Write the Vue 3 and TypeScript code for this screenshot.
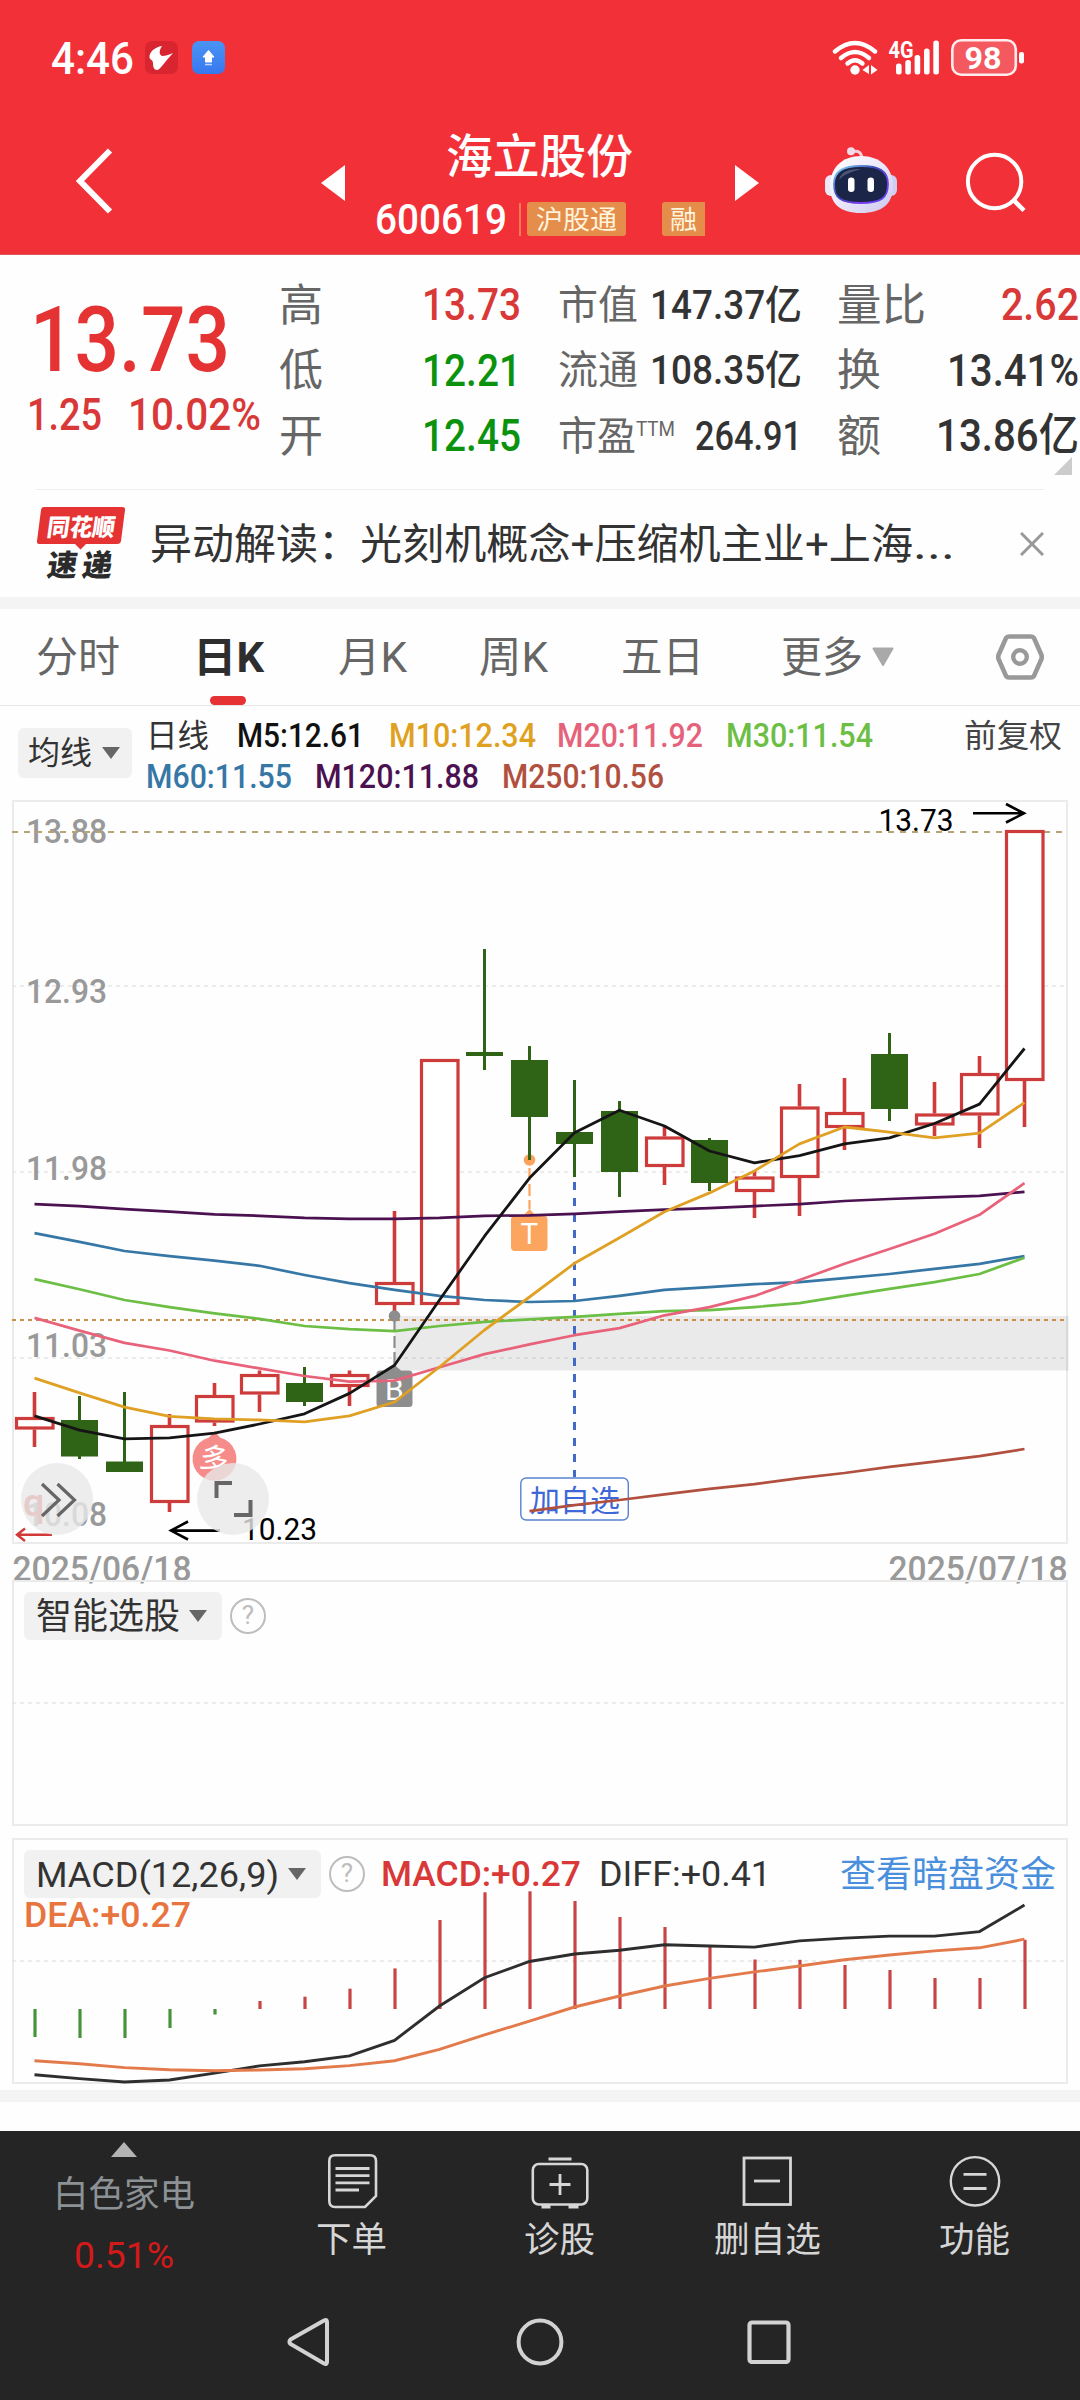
<script setup lang="ts">
import { defineComponent, h } from 'vue'

/* Single-line label whose advance width is fixed; cap height is centred in its box. */
const Fit = defineComponent({
  props: {
    t: { type: String, required: true },
    w: { type: Number, required: true },
    s: { type: Number, required: true },
  },
  setup(p) {
    return () =>
      h('svg', { width: p.w, height: p.s, style: 'display:block;overflow:visible;flex:none' }, [
        h('text', {
          x: 0,
          y: p.s * 0.855,
          'font-size': p.s,
          textLength: p.w,
          lengthAdjust: 'spacingAndGlyphs',
          fill: 'currentColor',
        }, p.t),
      ])
  },
})

const X0 = 34.5
const STEP = 45
const cx = (i: number) => X0 + STEP * i
const pts = (ys: number[], start = 0) => ys.map((y, i) => `${cx(i + start)},${y}`).join(' ')

interface Candle { up: boolean; top: number; bottom: number; high: number; low: number }
const c = (up: boolean, top: number, bottom: number, high: number, low: number): Candle => ({ up, top, bottom, high, low })
const candles: Candle[] = [
  c(true, 617, 629.5, 592, 647),
  c(false, 620, 656.5, 596, 659),
  c(false, 661.5, 672, 592, 672),
  c(true, 625, 703, 614, 712),
  c(true, 595, 622.5, 583, 626),
  c(true, 574, 594.5, 570.5, 612),
  c(false, 583, 602, 567, 606),
  c(true, 574, 587, 570.5, 606),
  c(true, 482, 505, 411, 516),
  c(true, 259, 505, 259, 505),
  c(false, 252, 256, 149, 270),
  c(false, 260, 317, 246, 360),
  c(false, 332, 344, 280, 377),
  c(false, 311, 372, 301, 397),
  c(true, 336.5, 367, 326.5, 385),
  c(false, 340, 383, 338, 391),
  c(true, 376.5, 392, 370.5, 418),
  c(true, 306.5, 378, 284, 416),
  c(true, 312, 328, 278, 350),
  c(false, 254, 309, 233, 321),
  c(true, 313.5, 325.5, 282, 336),
  c(true, 273, 315.5, 256, 348),
  c(true, 30, 281, 30, 327),
]

const averages = [
  { color: '#4b1150', start: 0, w: 2.7, ys: [404.1, 406.1, 409.2, 411.7, 414.3, 415.8, 417.9, 418.9, 418.9, 417.9, 415.8, 415.3, 413.8, 411.7, 409.7, 408.2, 406.1, 404.1, 401, 399, 397.4, 395.9, 391.8] },
  { color: '#3677a5', start: 0, w: 2.7, ys: [433.2, 441.8, 451, 456.1, 460.7, 465.8, 475, 483.2, 489.8, 495.9, 500, 502, 501, 495.9, 489.8, 487.2, 484.2, 482.1, 478.1, 474, 468.9, 463.8, 456.1] },
  { color: '#6cbe45', start: 0, w: 2.7, ys: [479.1, 489.3, 500, 507.1, 513.3, 518.9, 526, 529.1, 531.1, 526, 521.9, 519.4, 516.8, 513.8, 511.2, 510.2, 507.1, 503.1, 495.9, 488.8, 482.1, 474, 457.7] },
  { color: '#e8637a', start: 0, w: 2.7, ys: [517.9, 530.6, 542.9, 550.5, 560.7, 568.4, 576, 581.6, 580.6, 567.3, 554.1, 544.4, 535.2, 528.1, 515.3, 507.1, 495.9, 480.1, 463.8, 449, 433.7, 414.8, 383.2] },
  { color: '#151515', start: 0, w: 2.8, ys: [615.8, 630.1, 638.8, 637.8, 633.2, 624, 613.8, 593.4, 565.3, 500, 436.2, 378.1, 332.7, 310.2, 326, 351, 362.8, 355.6, 343.9, 337.8, 323.5, 304.1, 248.5] },
  { color: '#dfa023', start: 0, w: 2.8, ys: [578.1, 592.9, 607.1, 616.3, 618.9, 619.9, 621.9, 615.8, 602, 567, 530, 497, 463.3, 437.8, 411.7, 392.9, 370.9, 343.9, 327, 332.1, 337.8, 333.2, 302.6] },
  { color: '#b1503f', start: 11, w: 2.7, ys: [711.2, 705.1, 700, 694.4, 688.8, 684.2, 678.1, 673, 666.8, 661.7, 656.1, 649] },
]

const axis = [
  { t: '13.88', y: 43 },
  { t: '12.93', y: 203 },
  { t: '11.98', y: 380 },
  { t: '11.03', y: 557 },
  { t: '10.08', y: 726 },
]

const ZERO = 2009
const bars = [2037, 2038, 2038, 2028, 2014.5, 2001, 1996.7, 1988.7, 1968.4, 1920, 1892.3, 1891.3, 1901, 1917, 1927, 1946.4, 1959.5, 1959.8, 1965, 1970, 1978, 1978, 1939.8]
const diff = [2074.8, 2078.6, 2082, 2080, 2073.1, 2065.9, 2061.8, 2055.9, 2040.4, 2006, 1977.7, 1961.5, 1954, 1950.2, 1944.7, 1946, 1947.1, 1940.9, 1938.1, 1936.1, 1936.1, 1931.6, 1905.1]
const dea = [2060.7, 2063.8, 2067.6, 2069.7, 2070.7, 2070, 2068.7, 2065.6, 2060.7, 2049.4, 2034.9, 2021.1, 2007, 1996, 1986, 1978.4, 1971.9, 1966, 1959.8, 1955, 1950.9, 1947.8, 1939.2]
</script>

<template>
  <div class="page">
    <header class="top">
      <div class="status">
        <Fit class="clock" t="4:46" :w="83" :s="44" />
        <svg class="app1" width="33" height="33" viewBox="0 0 33 33">
          <rect width="33" height="33" rx="7" fill="#d9252f" />
          <path d="M17 5C10 6 4 11 4.500 16.500C5 19 8 19 8 22C8 26 9 29 12 29C15 29 17 24 28 12C25 13 21 15 17 15C13 13 15 8 17 5Z" fill="#fff" />
        </svg>
        <svg class="app2" width="33" height="33" viewBox="0 0 33 33">
          <defs><linearGradient id="upg" x1="0" y1="0" x2="0" y2="1"><stop offset="0" stop-color="#4a94f5" /><stop offset="1" stop-color="#3877ee" /></linearGradient></defs>
          <rect width="33" height="33" rx="7" fill="url(#upg)" />
          <path d="M16.500 9.500L22 16H19.500V21H13.500V16H11Z" fill="#fff" stroke="#fff" stroke-width="1" stroke-linejoin="round" />
          <rect x="13" y="22.800" width="7" height="1.500" fill="#b9d5ff" />
        </svg>
        <svg class="signals" width="195" height="42" viewBox="832 36 195 42">
          <g fill="none" stroke="#fff" stroke-width="4.400" stroke-linecap="round">
            <path d="M835 50.500Q855 33.500 875 50.500" />
            <path d="M841 57Q855 45 869 57" />
            <path d="M847.500 62.500Q855 56 862.500 62.500" />
          </g>
          <circle cx="855" cy="69" r="4.700" fill="#fff" />
          <path d="M862.500 69L869 64V73ZM871 64L877.500 69L871 73.500Z" fill="#fff" />
          <text class="g4" x="888.500" y="56.500" font-size="23" textLength="25" lengthAdjust="spacingAndGlyphs" fill="#fff">4G</text>
          <g fill="#fff">
            <rect x="896" y="62.500" width="5.600" height="11" rx="2.500" />
            <rect x="905.300" y="59" width="5.600" height="14.500" rx="2.500" />
            <rect x="914.600" y="54" width="5.600" height="19.500" rx="2.500" />
            <rect x="924" y="47.500" width="5.600" height="26" rx="2.500" />
            <rect x="933.300" y="39.500" width="5.600" height="34" rx="2.500" />
          </g>
          <rect x="952.300" y="39.300" width="63.500" height="34.500" rx="9" fill="#fff" fill-opacity=".2" stroke="#fff" stroke-opacity=".9" stroke-width="2.600" />
          <rect x="1019" y="51" width="5" height="11.500" rx="2.200" fill="#fff" />
          <text class="g4" x="964.500" y="68.300" font-size="32" textLength="37" lengthAdjust="spacingAndGlyphs" fill="#fff">98</text>
        </svg>
      </div>
      <div class="title-bar">
        <svg class="back" width="40" height="68" viewBox="0 0 40 68"><path d="M36 3.500L6 34L36 64.500" fill="none" stroke="#fff" stroke-width="6" /></svg>
        <svg class="prev" width="24" height="36" viewBox="0 0 24 36"><path d="M24 0V36L0 18Z" fill="#fff" /></svg>
        <div class="stock">
          <Fit class="name" t="海立股份" :w="187" :s="47" />
          <div class="code-row">
            <Fit class="code" t="600619" :w="132" :s="42.5" />
            <i class="sep" />
            <div class="tag tag-a"><Fit t="沪股通" :w="81" :s="26.500" /></div>
            <div class="tag tag-b"><Fit t="融" :w="27" :s="26.500" /></div>
          </div>
        </div>
        <svg class="next" width="24" height="36" viewBox="0 0 24 36"><path d="M0 0V36L24 18Z" fill="#fff" /></svg>
        <svg class="robot" width="74" height="70" viewBox="824 145 74 70">
          <defs>
            <linearGradient id="rb" x1="0" y1="0" x2="1" y2="1"><stop offset="0" stop-color="#fff" /><stop offset=".5" stop-color="#ece8fa" /><stop offset="1" stop-color="#c9c8ec" /></linearGradient>
            <linearGradient id="rr" x1="0" y1="0" x2="1" y2="1"><stop offset="0" stop-color="#8ee0ff" /><stop offset=".4" stop-color="#3b4bb5" /><stop offset=".75" stop-color="#7c3cf0" /><stop offset="1" stop-color="#4a4af0" /></linearGradient>
          </defs>
          <path d="M852 152Q862 149 862 160" fill="none" stroke="#f6cfd8" stroke-width="3" />
          <circle cx="851" cy="151.300" r="4" fill="#f2dbe8" />
          <rect x="825" y="175" width="12" height="21" rx="6" fill="#ece9f7" />
          <rect x="885" y="175" width="12" height="21" rx="6" fill="#cfcdf0" />
          <path d="M861 156C880 156 893 168 893 186C893 204 882 213 861 213C840 213 830 204 830 186C830 168 842 156 861 156Z" fill="url(#rb)" />
          <path d="M861 166C879 166 888 171 888 184C888 198 881 203 861 203C841 203 834 198 834 184C834 171 843 166 861 166Z" fill="#1b2547" stroke="url(#rr)" stroke-width="1.800" />
          <path d="M839 180C841 171 849 169 861 169C851 172 843 175 839 180Z" fill="#4a5575" />
          <rect x="848" y="177.500" width="6.500" height="14.500" rx="3.200" fill="#fff" />
          <rect x="867.500" y="177.500" width="6.500" height="14.500" rx="3.200" fill="#fff" />
        </svg>
        <svg class="search" width="62" height="62" viewBox="965 151 62 62">
          <circle cx="994.600" cy="181.500" r="26.700" fill="none" stroke="#fff" stroke-width="4" />
          <path d="M1013.500 200L1024 210.500" stroke="#fff" stroke-width="4.500" />
        </svg>
      </div>
    </header>

    <section class="quote">
      <div class="price">
        <Fit class="big" t="13.73" :w="200" :s="90" />
        <div class="chg">
          <Fit t="1.25" :w="75" :s="45" />
          <Fit class="pct" t="10.02%" :w="133" :s="45" />
        </div>
      </div>
      <div class="col col1">
        <div><Fit class="lab" t="高" :w="44" :s="44" /><Fit class="num red" t="13.73" :w="99" :s="45" /></div>
        <div><Fit class="lab" t="低" :w="44" :s="44" /><Fit class="num green" t="12.21" :w="99" :s="45" /></div>
        <div><Fit class="lab" t="开" :w="44" :s="44" /><Fit class="num green" t="12.45" :w="99" :s="45" /></div>
      </div>
      <div class="col col2">
        <div><Fit class="lab" t="市值" :w="80" :s="40" /><Fit class="num" t="147.37亿" :w="152" :s="40" /></div>
        <div><Fit class="lab" t="流通" :w="80" :s="40" /><Fit class="num" t="108.35亿" :w="152" :s="40" /></div>
        <div><Fit class="lab" t="市盈" :w="78" :s="40" /><Fit class="lab ttm" t="TTM" :w="39" :s="20" /><Fit class="num" t="264.91" :w="107" :s="40" /></div>
      </div>
      <div class="col col3">
        <div><Fit class="lab" t="量比" :w="89" :s="44" /><Fit class="num red" t="2.62" :w="78" :s="45" /></div>
        <div><Fit class="lab" t="换" :w="44" :s="44" /><Fit class="num" t="13.41%" :w="132" :s="45" /></div>
        <div><Fit class="lab" t="额" :w="44" :s="44" /><Fit class="num" t="13.86亿" :w="143" :s="45" /></div>
      </div>
      <i class="corner" />
    </section>

    <section class="news">
      <svg class="logo" width="92" height="76" viewBox="36 506 92 76">
        <path d="M44 507H122Q125.500 507 125 510L121 541Q120.500 544 117 544H86L80.500 549.500L75 544H40Q36.500 544 37 541L41 510Q41.500 507 44 507Z" fill="#e53232" />
        <text class="lg" transform="translate(46 535.500) skewX(-8)" font-size="24" textLength="68" lengthAdjust="spacingAndGlyphs" fill="#fff">同花顺</text>
        <text class="lg" transform="translate(46 575.500) skewX(-8)" x="0" font-size="30" textLength="30" lengthAdjust="spacingAndGlyphs" fill="#2b2b2b">速</text>
        <text class="lg" transform="translate(81 575.500) skewX(-8)" x="0" font-size="30" textLength="30" lengthAdjust="spacingAndGlyphs" fill="#2b2b2b">递</text>
      </svg>
      <Fit class="n1" t="异动解读：" :w="210" :s="42" />
      <Fit t="光刻机概念+压缩机主业+上海" :w="553" :s="42" />
      <Fit t="..." :w="42" :s="42" />
      <svg class="close" width="24" height="24" viewBox="0 0 24 24"><path d="M1 1L23 23M23 1L1 23" stroke="#999" stroke-width="3" /></svg>
    </section>

    <nav class="tabs">
      <Fit class="t1" t="分时" :w="84" :s="42" />
      <div class="active"><Fit t="日K" :w="71" :s="42" /><i /></div>
      <Fit class="t3" t="月K" :w="69" :s="42" />
      <Fit class="t4" t="周K" :w="69" :s="42" />
      <Fit class="t5" t="五日" :w="83" :s="42" />
      <Fit class="t6" t="更多" :w="82" :s="42" />
      <svg class="more" width="24" height="20" viewBox="0 0 24 20"><path d="M2.500 1.500H21.500L12 18Z" fill="#a9a9a9" stroke="#a9a9a9" stroke-width="2" stroke-linejoin="round" /></svg>
      <svg class="hex" width="50" height="48" viewBox="995 633 50 48">
        <path d="M1009 636.500H1031Q1033 636.500 1034 638L1041.500 655Q1042 657 1041.500 659L1034 676Q1033 677.500 1031 677.500H1009Q1007 677.500 1006 676L998.500 659Q998 657 998.500 655L1006 638Q1007 636.500 1009 636.500Z" fill="none" stroke="#999" stroke-width="4.600" />
        <circle cx="1020" cy="657" r="6.800" fill="none" stroke="#999" stroke-width="4.400" />
      </svg>
    </nav>

    <section class="legend">
      <div class="pick"><Fit t="均线" :w="64" :s="32" /><svg width="18" height="12" viewBox="0 0 18 12"><path d="M0 0H18L9 12Z" fill="#666" /></svg></div>
      <div class="rows">
        <div class="row">
          <Fit class="day" t="日线" :w="63" :s="31.500" />
          <Fit class="m5" t="M5:12.61" :w="127" :s="32.5" />
          <Fit class="m10" t="M10:12.34" :w="147" :s="32.5" />
          <Fit class="m20" t="M20:11.92" :w="146" :s="32.5" />
          <Fit class="m30" t="M30:11.54" :w="147" :s="32.5" />
          <Fit class="adj" t="前复权" :w="98" :s="32" />
        </div>
        <div class="row">
          <Fit class="m60" t="M60:11.55" :w="146" :s="32.5" />
          <Fit class="m120" t="M120:11.88" :w="164" :s="32.5" />
          <Fit class="m250" t="M250:10.56" :w="162" :s="32.5" />
        </div>
      </div>
    </section>

    <svg class="kline" width="1080" height="780" viewBox="0 0 1080 780">
      <rect x="13" y="1" width="1054" height="742" fill="none" stroke="#ebebeb" stroke-width="2" />
      <g stroke="#e6e6e6" stroke-width="1.500" stroke-dasharray="4 4">
        <path d="M12 186H1066" /><path d="M12 372H1066" /><path d="M12 558H1066" />
      </g>
      <g class="ax"><text v-for="a in axis" :key="a.t" x="26" :y="a.y" font-size="34" textLength="81" lengthAdjust="spacingAndGlyphs">{{ a.t }}</text></g>
      <path d="M12 32H1066" stroke="#b7a475" stroke-width="2" stroke-dasharray="6 6" />
      <rect x="394.500" y="516" width="674" height="54.500" fill="#000" fill-opacity=".08" />
      <path d="M12 520H1066" stroke="#cb8c4a" stroke-width="2" stroke-dasharray="4 4" />

      <g v-for="(k, i) in candles" :key="i">
        <template v-if="k.up">
          <path :d="`M${cx(i)} ${k.high}V${k.top}M${cx(i)} ${k.bottom}V${k.low}`" stroke="#cd3b3b" stroke-width="3.600" />
          <rect :x="cx(i) - 18" :y="k.top + 1.500" width="36.500" :height="k.bottom - k.top - 3" fill="#fff" stroke="#cd3b3b" stroke-width="3.200" />
        </template>
        <template v-else>
          <path :d="`M${cx(i)} ${k.high}V${k.low}`" stroke="#2f6417" stroke-width="3" />
          <rect :x="cx(i) - 18.500" :y="k.top" width="37" :height="k.bottom - k.top" fill="#2f6417" />
        </template>
      </g>

      <path d="M394.500 520V567" stroke="#8d8d8d" stroke-width="2.200" stroke-dasharray="12 4" />
      <circle cx="394.500" cy="516" r="5.800" fill="#8d8d8d" />
      <path d="M380 570.500H388L394.500 565L401 570.500H409Q412.500 570.500 412.500 574V603.500Q412.500 607 409 607H380Q376.500 607 376.500 603.500V574Q376.500 570.500 380 570.500Z" fill="#8d8d8d" />
      <text x="385" y="599.500" font-size="30" fill="#fff">B</text>
      <path d="M529.500 368V409" stroke="#fba35c" stroke-width="2.200" stroke-dasharray="12 4" />
      <circle cx="529.500" cy="360" r="5.800" fill="#fba35c" />
      <path d="M529.500 340V360" stroke="#2f6417" stroke-width="3" />
      <path d="M514 416H523L529.500 409L536 416H544Q547.500 416 547.500 420V447Q547.500 451 544 451H515Q511 451 511 447V420Q511 416 514 416Z" fill="#fba55f" />
      <text x="520.500" y="444" font-size="29.500" fill="#fff">T</text>
      <path d="M574.500 382V677" stroke="#4169c8" stroke-width="3" stroke-dasharray="8 8" />
      <rect x="520.800" y="678" width="107.500" height="42" rx="5.500" fill="#fff" stroke="#5a82cf" stroke-width="1.400" />
      <text x="530" y="711" font-size="30" textLength="90" fill="#3e68d8">加自选</text>
      <path d="M214.500 631L220 637.500A22 22 0 1 1 209 637.500Z" fill="#f58c8a" />
      <text x="200" y="669" font-size="29" fill="#fff" transform="rotate(12 214 658)">多</text>

      <polyline v-for="m in averages" :key="m.color" :points="pts(m.ys, m.start)" fill="none" :stroke="m.color" :stroke-width="m.w" stroke-linejoin="round" />

      <text class="q" x="23" y="716" font-size="38" fill="#e05050">q</text>
      <path d="M52 734.700H17M25 728.500L17 734.700L25 741" fill="none" stroke="#d23a3a" stroke-width="2.400" />
      <g fill="none" stroke="#000" stroke-width="2.600">
        <path d="M973 13.300H1024M1006 4L1024 13.300L1006 22.500" />
        <path d="M220 730.600H171M188 721.500L171 730.600L188 739.500" />
      </g>
      <text x="878.500" y="31" font-size="31" textLength="75" lengthAdjust="spacingAndGlyphs">13.73</text>
      <text x="242" y="739.500" font-size="31" textLength="75" lengthAdjust="spacingAndGlyphs">10.23</text>
      <circle cx="57" cy="699" r="36" fill="#e8e8e8" fill-opacity=".8" />
      <circle cx="233" cy="699" r="36" fill="#e8e8e8" fill-opacity=".8" />
      <g fill="none" stroke="#666">
        <path d="M42 684L59 700L42 716M57.500 684L74.500 700L57.500 716" stroke-width="3.200" />
        <path d="M216.500 698V683H232M250.500 700V715H234" stroke-width="4" />
      </g>
      <text class="date" x="12.500" y="781" font-size="34.500" textLength="179" lengthAdjust="spacingAndGlyphs">2025/06/18</text>
      <text class="date" x="888.500" y="781" font-size="34.500" textLength="179" lengthAdjust="spacingAndGlyphs">2025/07/18</text>
    </svg>

    <section class="panel p1">
      <div class="head">
        <div class="drop"><Fit t="智能选股" :w="144" :s="36" /><svg width="18" height="12" viewBox="0 0 18 12"><path d="M0 0H18L9 12Z" fill="#666" /></svg></div>
        <i class="help">?</i>
      </div>
      <svg class="plot" width="1056" height="246" viewBox="12 1580 1056 246"><path d="M12 1703H1066" stroke="#e6e6e6" stroke-width="1.500" stroke-dasharray="4 4" /></svg>
    </section>

    <section class="panel p2">
      <svg class="plot" width="1056" height="246" viewBox="12 1838 1056 246">
        <path d="M12 1961H1066" stroke="#e6e6e6" stroke-width="1.500" stroke-dasharray="4 4" />
        <path v-for="(b, i) in bars" :key="i" :d="`M${cx(i) + 0.5} ${ZERO}V${b}`" :stroke="b > ZERO ? '#46943a' : '#c94444'" stroke-width="3.200" />
        <polyline :points="pts(diff)" fill="none" stroke="#2e2e2e" stroke-width="2.900" />
        <polyline :points="pts(dea)" fill="none" stroke="#e37a4b" stroke-width="2.900" />
      </svg>
      <div class="head">
        <div class="drop"><Fit t="MACD(12,26,9)" :w="243" :s="35" /><svg width="18" height="12" viewBox="0 0 18 12"><path d="M0 0H18L9 12Z" fill="#666" /></svg></div>
        <i class="help">?</i>
        <Fit class="v1" t="MACD:+0.27" :w="200" :s="35.5" />
        <Fit class="v2" t="DIFF:+0.41" :w="172" :s="35.5" />
        <Fit class="link" t="查看暗盘资金" :w="216" :s="36" />
      </div>
      <Fit class="dea" t="DEA:+0.27" :w="167" :s="35.5" />
    </section>

    <div class="band" />

    <footer class="dock">
      <div class="acts">
        <div class="sector">
          <i class="up" />
          <Fit class="sn" t="白色家电" :w="142" :s="36" />
          <Fit class="sp" t="0.51%" :w="100" :s="37.5" />
        </div>
        <div class="act a1">
          <svg width="60" height="60" viewBox="322 2151 60 60" fill="none" stroke="#d6d6d6">
            <path d="M335 2155.300H370Q376 2155.300 376 2161V2196L365 2207H335Q329.300 2207 329.300 2201V2161Q329.300 2155.300 335 2155.300Z" stroke-width="2.600" />
            <path d="M335.500 2168.500H369.500M335.500 2175.700H369.500M335.500 2182.900H369.500M335.500 2190H359" stroke-width="2.800" />
          </svg>
          <Fit t="下单" :w="71" :s="35.5" />
        </div>
        <div class="act a2">
          <svg width="60" height="60" viewBox="529.500 2151 60 60" fill="none" stroke="#d6d6d6">
            <rect x="532.300" y="2164" width="54.500" height="40.500" rx="6" stroke-width="2.600" />
            <path d="M548 2159H571M559.500 2174V2195M549 2184.500H570" stroke-width="2.800" />
            <path d="M541 2206.500H550M568 2206.500H578" stroke-width="4" />
          </svg>
          <Fit t="诊股" :w="71" :s="35.5" />
        </div>
        <div class="act a3">
          <svg width="60" height="60" viewBox="737 2151 60 60" fill="none" stroke="#d6d6d6" stroke-width="2.800">
            <rect x="744" y="2158" width="46.500" height="46.500" /><path d="M754 2181H780" />
          </svg>
          <Fit t="删自选" :w="107" :s="35.5" />
        </div>
        <div class="act a4">
          <svg width="60" height="60" viewBox="945.500 2151 60 60" fill="none" stroke="#d6d6d6">
            <circle cx="975.500" cy="2181.300" r="24.200" stroke-width="2.400" /><path d="M964 2174.300H987M964 2188.500H987" stroke-width="2.800" />
          </svg>
          <Fit t="功能" :w="71" :s="35.5" />
        </div>
      </div>
      <div class="sys">
        <svg width="44" height="52" viewBox="286 2316 44 52"><path d="M290.500 2339.500L324 2320.500Q327 2319 327 2322V2362Q327 2365 324 2363.500L290.500 2344Q288.500 2342 290.500 2339.500Z" fill="none" stroke="#d2d2d2" stroke-width="4" /></svg>
        <svg class="home" width="48" height="48" viewBox="0 0 48 48"><circle cx="24" cy="24" r="21.400" fill="none" stroke="#d2d2d2" stroke-width="4" /></svg>
        <svg class="recent" width="44" height="44" viewBox="0 0 44 44"><rect x="2.500" y="2.500" width="39" height="39.500" rx="2.500" fill="none" stroke="#d2d2d2" stroke-width="4.200" /></svg>
      </div>
    </footer>
  </div>
</template>

<style>
body { background: #fff; }
</style>

<style scoped>
.page { width: 1080px; height: 2400px; overflow: hidden; display: flex; flex-direction: column; background: #fefefe; font-family: Roboto, "Noto Sans CJK SC", sans-serif; color: #333; }
.page > * { flex: none; }
.top { height: 255px; box-sizing: border-box; background: #f23038; color: #fff; border-bottom: 1px solid #d9595c; }
.status { height: 115px; display: flex; align-items: center; }
.clock { margin-left: 51px; font-weight: 500; }
.app1 { margin-left: 11px; }
.app2 { margin-left: 14px; }
.signals { margin-left: auto; margin-right: 53px; }
.g4 { font-weight: 700; }
.title-bar { height: 139px; display: flex; align-items: flex-start; }
.back { margin: 32px 0 0 74px; }
.prev { margin: 50px 0 0 207px; }
.stock { width: 390px; display: flex; flex-direction: column; }
.name { margin: 18px 0 0 101px; font-weight: 500; }
.code-row { display: flex; align-items: center; margin-top: 18px; }
.code { margin-left: 30px; font-weight: 500; }
.sep { width: 2px; height: 33px; margin-left: 12px; background: #f27d53; }
.tag { height: 34px; margin-left: 6px; background: #e58d4b; border-radius: 3px; display: flex; align-items: center; justify-content: center; color: #fff4dc; }
.tag-a { width: 99px; }
.tag-b { width: 43px; margin-left: 36px; border-radius: 3px 0 0 3px; }
.next { margin-top: 50px; }
.robot { margin: 30px 0 0 65px; }
.search { margin: 36px 0 0 67px; }

.quote { position: relative; height: 234px; display: flex; }
.price { width: 280px; display: flex; flex-direction: column; font-weight: 500; color: #e53232; }
.big { margin: 39px 0 0 30px; }
.chg { display: flex; margin: 8px 0 0 27px; color: #d93838; }
.pct { margin-left: 26px; }
.col { display: flex; flex-direction: column; margin-top: 17px; }
.col > div { height: 65.5px; display: flex; align-items: center; }
.col .num { margin-left: auto; font-weight: 500; }
.col .lab { color: #666; font-weight: 400; }
.col1 { width: 242px; margin-left: -1px; }
.col2 { width: 244px; margin-left: 37px; }
.col3 { width: 242px; margin-left: 35px; }
.ttm { margin-top: -14px; }
.red { color: #d93838; }
.green { color: #0b930f; }
.corner { position: absolute; right: 8px; bottom: 14px; width: 18px; height: 18px; background: #ccc; clip-path: polygon(100% 0, 100% 100%, 0 100%); }

.news { height: 108px; box-sizing: border-box; margin-left: 36px; width: 1008px; border-top: 1.5px solid #eee; display: flex; align-items: center; }
.lg { font-weight: 900; }
.logo { margin-top: 1px; }
.n1 { margin-left: 22px; }
.close { margin-left: auto; }

.tabs { height: 96px; border-top: 12px solid #f4f4f4; border-bottom: 1px solid #e6e6e6; display: flex; align-items: center; color: #666; }
.tabs > .t1 { margin-left: 36px; }
.active { align-self: stretch; position: relative; display: flex; align-items: center; margin-left: 73px; color: #2e2e2e; font-weight: 700; }
.active i { position: absolute; left: 17px; bottom: 0; width: 36px; height: 9px; border-radius: 4.5px; background: #e63232; }
.t3 { margin-left: 74px; }
.t4 { margin-left: 72px; }
.t5 { margin-left: 73px; }
.t6 { margin-left: 77px; }
.more { margin-left: 8px; }
.hex { margin-left: 100px; }

.legend { height: 94px; display: flex; }
.pick { margin: 22px 0 0 18px; width: 114px; height: 50px; background: #f1f1f1; border-radius: 6px; display: flex; align-items: center; box-sizing: border-box; padding-left: 10px; gap: 10px; }
.rows { flex: 1; padding-top: 9px; }
.row { height: 41px; display: flex; align-items: center; font-weight: 500; }
.day { margin-left: 14px; font-weight: 400; }
.m5 { margin-left: 28px; color: #111; }
.m10 { margin-left: 25px; color: #e0a020; }
.m20 { margin-left: 21px; color: #e5637a; }
.m30 { margin-left: 23px; color: #6cbe45; }
.adj { margin-left: 91px; color: #444; font-weight: 400; }
.m60 { margin-left: 14px; color: #3677a5; }
.m120 { margin-left: 23px; color: #4b1150; }
.m250 { margin-left: 23px; color: #b1503f; }

.kline { display: block; overflow: visible; }
.ax, .date { fill: #999; font-weight: 500; }
.q { font-weight: 500; }

.panel { position: relative; box-sizing: border-box; width: 1056px; height: 246px; margin-left: 12px; border: 2px solid #ebebeb; }
.p2 { margin-top: 12px; }
.plot { position: absolute; left: -2px; top: -2px; }
.head { position: relative; display: flex; align-items: center; padding: 10px 0 0 10px; height: 48px; }
.drop { height: 48px; padding: 0 15px 0 12px; display: flex; align-items: center; gap: 9px; background: #f1f1f1; border-radius: 6px; }
.help { box-sizing: border-box; width: 36px; height: 36px; margin-left: 8px; border: 2.5px solid #bdbdbd; border-radius: 50%; color: #bdbdbd; font-style: normal; font-size: 26px; line-height: 31px; text-align: center; }
.v1 { margin-left: 16px; color: #d93838; }
.v2 { margin-left: 18px; }
.link { margin-left: auto; margin-right: 10px; color: #4a8fdc; }
.p2 .head > .v1, .dea { font-weight: 500; }
.dea { position: relative; margin: -1px 0 0 10px; color: #e8743f; }

.band { height: 12px; margin-top: 6px; background: #f4f4f4; }
.dock { flex: 1; margin-top: 29px; background: #252525; color: #d6d6d6; }
.acts { height: 162px; display: flex; }
.sector { width: 248px; display: flex; flex-direction: column; align-items: center; }
.up { width: 26px; height: 15px; margin-top: 11px; background: #b4b4b4; clip-path: polygon(50% 0, 100% 100%, 0 100%); }
.sn { margin-top: 19px; color: #8b9195; }
.sp { margin-top: 24px; color: #d21a1a; }
.act { width: 207.7px; display: flex; flex-direction: column; align-items: center; padding-top: 20px; gap: 11px; }
.sys { display: flex; align-items: center; height: 98px; padding-left: 286px; }
.home { margin-left: 186px; }
.recent { margin-left: 183px; }
</style>
